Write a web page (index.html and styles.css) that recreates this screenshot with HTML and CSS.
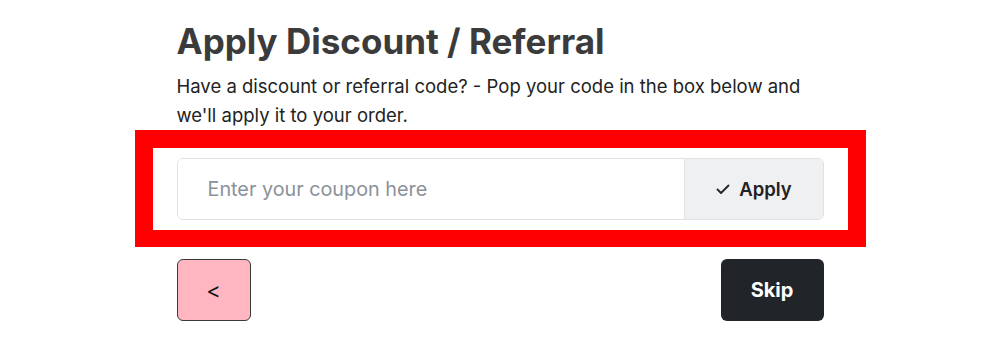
FILE: index.html
```html
<!DOCTYPE html>
<html lang="en">
<head>
  <meta charset="UTF-8">
  <title>Apply Discount</title>
  <meta name="viewport" content="width=device-width, initial-scale=1.0">
  <link rel="stylesheet" href="styles.css">
</head>
<body>

<div class="step">
  <h2 class="step-title">Apply Discount / Referral</h2>
  <p class="step-text">Have a discount or referral code? - Pop your code in the box below and we'll apply it to your order.</p>

  <div class="coupon-box">
    <div class="coupon-group">
      <input class="coupon-input" type="text" placeholder="Enter your coupon here">
      <button class="coupon-apply">
        <svg width="16" height="16" viewBox="0 0 16 16"><path d="M2.5 8.5l3.5 3.5 7.5-7.5" fill="none" stroke="#222" stroke-width="1.8" stroke-linecap="round" stroke-linejoin="round"/></svg>
        Apply
      </button>
    </div>
  </div>

  <div class="step-nav">
    <button class="btn-back">&lt;</button>
    <button class="btn-skip">Skip</button>
  </div>
</div>

</body>
</html>
```

FILE: styles.css
```css
* {
  box-sizing: border-box;
}
body {
  margin: 0;
  font-family: Inter, 'Noto Sans', sans-serif;
  background: #fff;
  color: #222;
}
.step {
  width: 647px;
  margin: 0 auto;
  padding-top: 20px;
}
.step-title {
  margin: 0 0 10px;
  font-size: 35px;
  line-height: 42px;
  font-weight: 700;
  color: #3b3b3b;
}
.step-text {
  margin: 0;
  font-size: 18.5px;
  line-height: 29px;
}
.coupon-box {
  margin: 0 -42px;
  border: 18px solid #ff0000;
  border-bottom-width: 17px;
  padding: 10px 24px;
}
.coupon-group {
  display: flex;
  height: 62px;
  border: 1px solid #dee2e6;
  border-radius: 6px;
  overflow: hidden;
}
.coupon-input {
  flex: 1;
  border: none;
  outline: none;
  padding: 0 30px;
  font-family: inherit;
  font-size: 19.8px;
  color: #222;
}
.coupon-input::placeholder {
  color: #8b9199;
}
.coupon-apply {
  width: 139px;
  border: none;
  border-left: 1px solid #dee2e6;
  background: #eff0f2;
  font-family: inherit;
  font-size: 18.5px;
  font-weight: 600;
  color: #222;
  display: flex;
  align-items: center;
  justify-content: center;
  gap: 8px;
  cursor: pointer;
}
.step-nav {
  display: flex;
  justify-content: space-between;
  margin-top: 12px;
}
.btn-back,
.btn-skip {
  height: 62px;
  border-radius: 6px;
  font-family: inherit;
  cursor: pointer;
}
.btn-back {
  width: 74px;
  background: #ffb6c1;
  border: 1px solid #3a3a3a;
  font-size: 22px;
  color: #111;
}
.btn-skip {
  width: 103px;
  background: #212529;
  border: none;
  color: #fff;
  font-size: 20px;
  font-weight: 700;
}
```
